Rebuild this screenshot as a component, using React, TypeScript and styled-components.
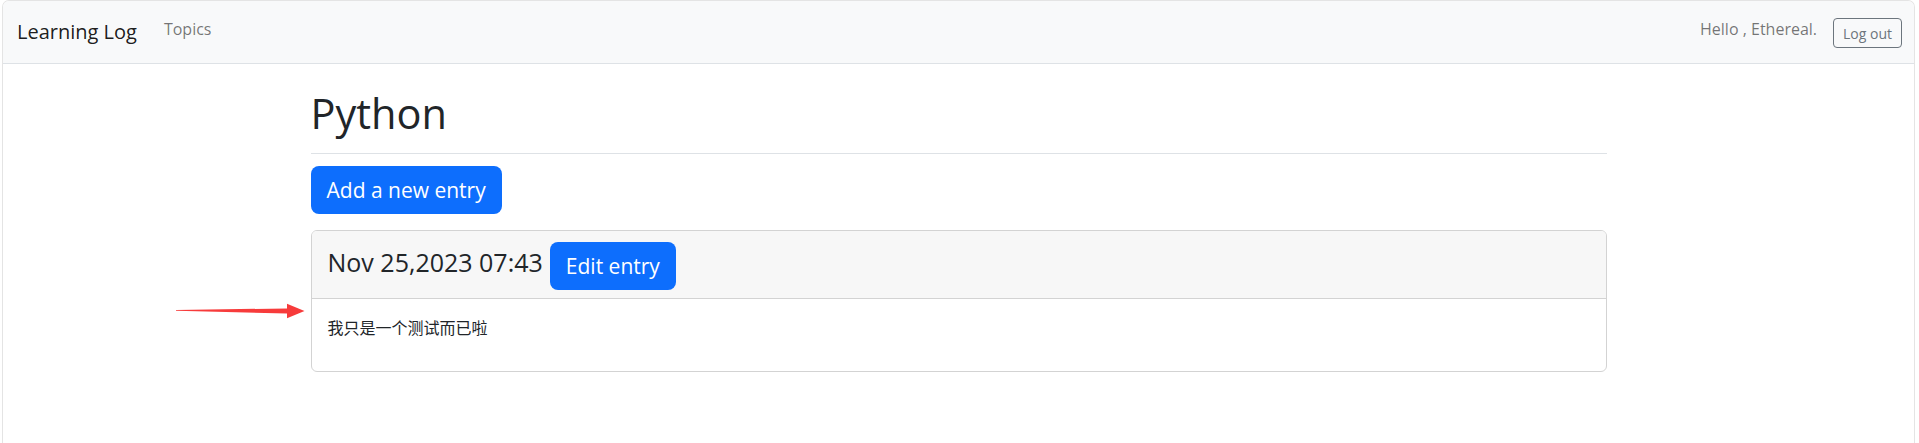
import styled, { createGlobalStyle } from 'styled-components';

const GlobalStyle = createGlobalStyle`
  html, body {
    margin: 0;
    padding: 0;
    background: #ffffff;
  }
  body {
    font-family: 'Open Sans', 'Noto Sans CJK SC', sans-serif;
    color: #212529;
  }
`;

function App() {
  return (
    <>
      <GlobalStyle />
      <Window>
        <NavBar>
          <Brand>Learning Log</Brand>
          <NavLink>Topics</NavLink>
          <NavRight>
            <Greeting>Hello , Ethereal.</Greeting>
            <LogoutButton>Log out</LogoutButton>
          </NavRight>
        </NavBar>
        <Container>
          <PageHeader>
            <Title>Python</Title>
          </PageHeader>
          <PrimaryButton>Add a new entry</PrimaryButton>
          <Card>
            <CardHeader>
              <EntryDate>Nov 25,2023 07:43</EntryDate>
              <PrimaryButton>Edit entry</PrimaryButton>
            </CardHeader>
            <CardBody>
              <EntryText>我只是一个测试而已啦</EntryText>
            </CardBody>
          </Card>
        </Container>
        <Arrow width="140" height="24" viewBox="170 298 140 24">
          <polygon
            points="176,309 287,307.4 287,302.7 304.5,310 287,317.3 287,312.6 176,309.8"
            fill="#f73b3b"
          />
        </Arrow>
      </Window>
    </>
  );
}

export default App;

const Window = styled.div`
  position: relative;
  margin-left: 2px;
  width: 1913px;
  height: 443px;
  border: 1px solid #e4e4e4;
  border-bottom: none;
  border-radius: 7px 7px 0 0;
  overflow: hidden;
  box-sizing: border-box;
`;

const NavBar = styled.nav`
  display: flex;
  align-items: flex-start;
  height: 62px;
  padding: 0 12px 0 14px;
  background: #f8f9fa;
  border-bottom: 1px solid #dee2e6;
`;

const Brand = styled.div`
  font-size: 20px;
  line-height: 30px;
  padding-top: 16px;
  color: rgba(0, 0, 0, 0.9);
  margin-right: 27px;
`;

const NavLink = styled.div`
  font-size: 16px;
  line-height: 24px;
  padding-top: 16px;
  color: rgba(0, 0, 0, 0.55);
`;

const NavRight = styled.div`
  margin-left: auto;
  display: flex;
  align-items: flex-start;
  gap: 16px;
`;

const Greeting = styled.span`
  font-size: 16px;
  line-height: 24px;
  padding-top: 16px;
  color: rgba(0, 0, 0, 0.55);
`;

const LogoutButton = styled.button`
  margin-top: 17px;
  height: 30px;
  padding: 0 9px;
  font-family: inherit;
  font-size: 14px;
  color: #6c757d;
  background: transparent;
  border: 1px solid #6c757d;
  border-radius: 4px;
`;

const Container = styled.main`
  width: 1296px;
  margin: 0 auto;
  padding-top: 25px;
`;

const PageHeader = styled.div`
  padding-bottom: 8px;
  margin-bottom: 12px;
  border-bottom: 1px solid #dee2e6;
`;

const Title = styled.h1`
  margin: 0 0 8px;
  font-size: 41.5px;
  font-weight: 400;
  line-height: 48px;
  color: #212529;
`;

const PrimaryButton = styled.button`
  display: inline-flex;
  align-items: center;
  justify-content: center;
  height: 48px;
  padding: 0 16px;
  font-family: inherit;
  font-size: 21px;
  color: #ffffff;
  background: #0d6efd;
  border: none;
  border-radius: 8px;
  flex-shrink: 0;
`;

const Card = styled.div`
  margin-top: 16px;
  border: 1px solid #d3d3d3;
  border-radius: 6px;
  overflow: hidden;
`;

const CardHeader = styled.div`
  display: flex;
  align-items: center;
  gap: 7px;
  padding: 11px 16px 8px;
  background: #f7f7f7;
  border-bottom: 1px solid #d3d3d3;
`;

const EntryDate = styled.h4`
  margin: 0 0 7px;
  font-size: 25px;
  font-weight: 400;
  line-height: 29px;
  color: #212529;
`;

const CardBody = styled.div`
  padding: 16px;
`;

const EntryText = styled.p`
  margin: 0 0 16px;
  font-family: 'Noto Sans CJK SC', sans-serif;
  font-size: 16px;
  line-height: 24px;
  color: #212529;
`;

const Arrow = styled.svg`
  position: absolute;
  left: 167px;
  top: 298px;
`;
